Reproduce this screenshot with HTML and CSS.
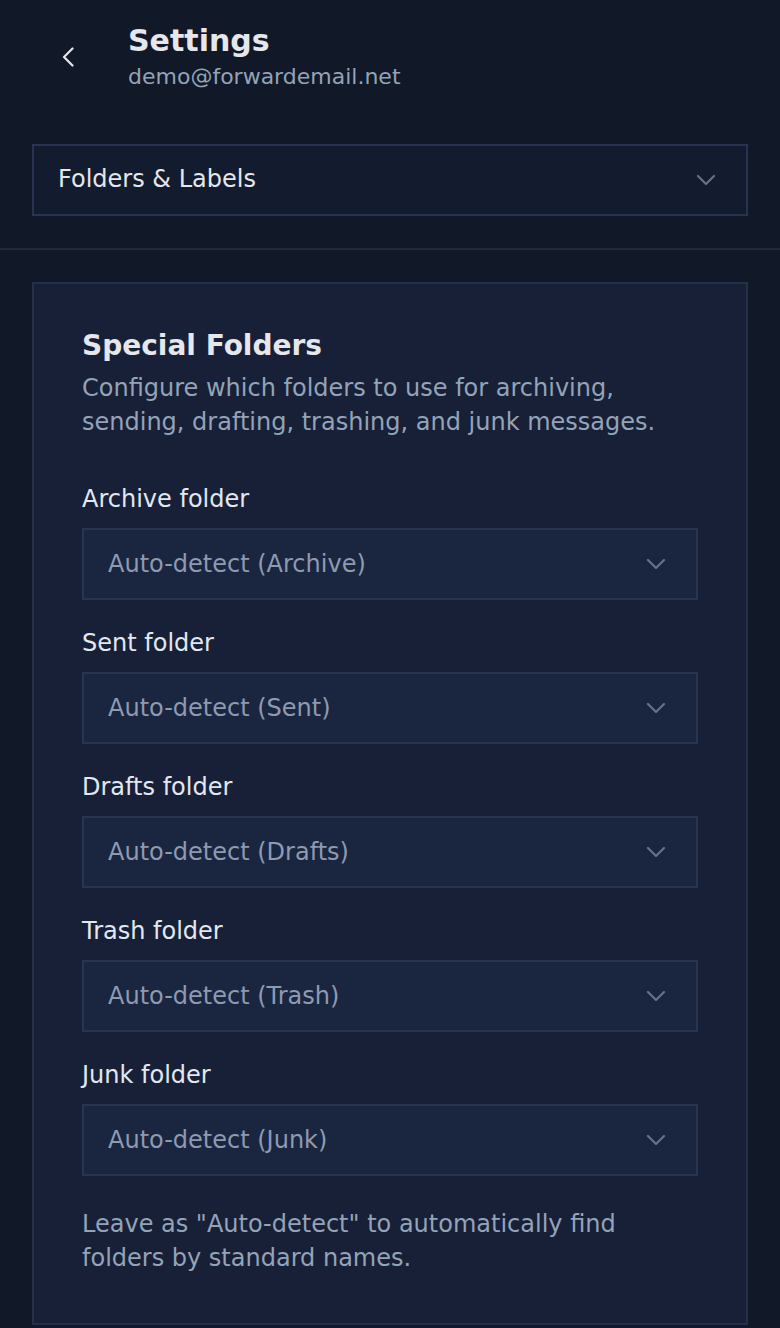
FILE: index.html
```html
<!DOCTYPE html>
<html lang="en">
<head>
<meta charset="utf-8">
<title>Settings</title>
<link rel="stylesheet" href="styles.css">
</head>
<body>
<header class="header">
  <button class="back" aria-label="Back">
    <svg width="12" height="20" viewBox="0 0 12 20"><polyline points="10.5,1.5 2,10 10.5,18.5" fill="none" stroke="currentColor" stroke-width="2.2" stroke-linecap="round" stroke-linejoin="round"/></svg>
  </button>
  <div class="titles">
    <h1 class="title">Settings</h1>
    <div class="email">demo@forwardemail.net</div>
  </div>
</header>
<nav class="nav">
  <div class="nav-select">
    <span>Folders &amp; Labels</span>
    <svg class="chev" width="20" height="12" viewBox="0 0 20 12"><polyline points="2,2 10,10 18,2" fill="none" stroke="currentColor" stroke-width="2.2" stroke-linecap="round" stroke-linejoin="round"/></svg>
  </div>
</nav>
<main class="main">
  <section class="card">
    <h2 class="card-title">Special Folders</h2>
    <p class="card-desc">Configure which folders to use for archiving, sending, drafting, trashing, and junk messages.</p>
    <div class="fields">
      <div class="field">
        <div class="label">Archive folder</div>
        <div class="select"><span>Auto-detect (Archive)</span><svg class="chev" width="20" height="12" viewBox="0 0 20 12"><polyline points="2,2 10,10 18,2" fill="none" stroke="currentColor" stroke-width="2.2" stroke-linecap="round" stroke-linejoin="round"/></svg></div>
      </div>
      <div class="field">
        <div class="label">Sent folder</div>
        <div class="select"><span>Auto-detect (Sent)</span><svg class="chev" width="20" height="12" viewBox="0 0 20 12"><polyline points="2,2 10,10 18,2" fill="none" stroke="currentColor" stroke-width="2.2" stroke-linecap="round" stroke-linejoin="round"/></svg></div>
      </div>
      <div class="field">
        <div class="label">Drafts folder</div>
        <div class="select"><span>Auto-detect (Drafts)</span><svg class="chev" width="20" height="12" viewBox="0 0 20 12"><polyline points="2,2 10,10 18,2" fill="none" stroke="currentColor" stroke-width="2.2" stroke-linecap="round" stroke-linejoin="round"/></svg></div>
      </div>
      <div class="field">
        <div class="label">Trash folder</div>
        <div class="select"><span>Auto-detect (Trash)</span><svg class="chev" width="20" height="12" viewBox="0 0 20 12"><polyline points="2,2 10,10 18,2" fill="none" stroke="currentColor" stroke-width="2.2" stroke-linecap="round" stroke-linejoin="round"/></svg></div>
      </div>
      <div class="field">
        <div class="label">Junk folder</div>
        <div class="select"><span>Auto-detect (Junk)</span><svg class="chev" width="20" height="12" viewBox="0 0 20 12"><polyline points="2,2 10,10 18,2" fill="none" stroke="currentColor" stroke-width="2.2" stroke-linecap="round" stroke-linejoin="round"/></svg></div>
      </div>
    </div>
    <p class="note">Leave as "Auto-detect" to automatically find folders by standard names.</p>
  </section>
</main>
</body>
</html>
```

FILE: styles.css
```css
* { box-sizing: border-box; }
html, body {
  margin: 0;
  padding: 0;
  background: #111827;
  font-family: "DejaVu Sans", sans-serif;
  color: #e5e7eb;
}
.header {
  display: flex;
  align-items: center;
  padding: 23px 0 21px 48px;
}
.back {
  width: 40px;
  height: 40px;
  margin-right: 40px;
  padding: 0;
  border: 0;
  background: transparent;
  color: #e5e7eb;
  display: flex;
  align-items: center;
  justify-content: center;
}
.title {
  margin: 0;
  font-size: 30px;
  line-height: 36px;
  font-weight: 700;
  color: #e5e7eb;
}
.email {
  margin-top: 4px;
  font-size: 22px;
  line-height: 28px;
  color: #94a3b8;
}
.nav {
  padding: 32px;
  border-bottom: 2px solid #1e293d;
}
.nav-select {
  height: 72px;
  display: flex;
  align-items: center;
  justify-content: space-between;
  padding: 0 30px 0 24px;
  background: #131c2e;
  border: 2px solid #283350;
  font-size: 24px;
  line-height: 32px;
  color: #e5e7eb;
}
.nav-select span { margin-top: -2px; }
.chev { color: #667189; display: block; }
.main { padding: 32px 32px 0; }
.card {
  background: #172037;
  border: 2px solid #243049;
  padding: 48px;
}
.card-title {
  margin: 0;
  font-size: 28px;
  line-height: 28px;
  font-weight: 700;
  color: #e5e7eb;
}
.card-desc {
  margin: 11px 0 0;
  font-size: 24px;
  line-height: 34px;
  color: #94a3b8;
}
.fields { margin-top: 43px; }
.field { margin-bottom: 26px; }
.label {
  font-size: 24px;
  line-height: 34px;
  color: #e2e8f0;
  margin-bottom: 12px;
}
.select {
  height: 72px;
  display: flex;
  align-items: center;
  justify-content: space-between;
  padding: 0 30px 0 24px;
  background: #1a2540;
  border: 2px solid #29344f;
  font-size: 24px;
  color: #8e9ab0;
}
.note {
  margin: 31px 0 0;
  font-size: 24px;
  line-height: 34px;
  color: #94a3b8;
}
```
